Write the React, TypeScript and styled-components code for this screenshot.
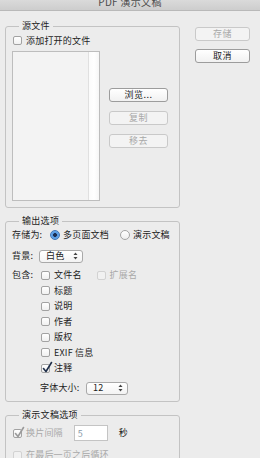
import React from 'react';
import styled, { createGlobalStyle, css } from 'styled-components';

const GlobalStyle = createGlobalStyle`
  html, body {
    margin: 0;
    padding: 0;
    background: #ececec;
  }
  body {
    font-family: "Noto Sans CJK SC", "Noto Sans", "Liberation Sans", sans-serif;
    font-size: 9px;
    color: #1c1c1c;
  }
`;

const Window = styled.div`
  width: 260px;
  height: 458px;
  overflow: hidden;
  background: #ececec;
`;

const TitleBar = styled.div`
  height: 10px;
  overflow: hidden;
  background: linear-gradient(#dadada, #cdcdcd);
  border-bottom: 1px solid #b9b9b9;
  display: flex;
  justify-content: center;
`;

const TitleText = styled.span`
  font-size: 10px;
  line-height: 10px;
  margin-top: -3px;
  color: #4c4c4c;
  letter-spacing: 0.3px;
`;

const Body = styled.div`
  display: flex;
  gap: 15px;
  padding-left: 5px;
`;

const LeftColumn = styled.div`
  width: 175px;
  display: flex;
  flex-direction: column;
`;

const RightColumn = styled.div`
  width: 55px;
  padding-top: 16px;
  display: flex;
  flex-direction: column;
  gap: 8px;
`;

const Group = styled.fieldset<{ $top: number; $bottom: number }>`
  margin: ${p => p.$top}px 0 0 0;
  padding: 0 6px ${p => p.$bottom}px 6px;
  border: 1px solid #c3c3c3;
  border-radius: 3px;
  min-width: 0;
  box-sizing: border-box;
`;

const Legend = styled.legend`
  margin-left: 7px;
  padding: 0 3px;
  font-size: 9px;
  line-height: 10px;
  color: #1c1c1c;
  letter-spacing: 0.3px;
`;

const Row = styled.div<{ $h: number; $mt?: number; $indent?: number; $gap?: number }>`
  display: flex;
  align-items: center;
  height: ${p => p.$h}px;
  margin-top: ${p => p.$mt ?? 0}px;
  padding-left: ${p => p.$indent ?? 0}px;
  gap: ${p => p.$gap ?? 0}px;
`;

const Text = styled.span<{ $disabled?: boolean; $w?: number }>`
  font-size: 9px;
  line-height: 10px;
  white-space: nowrap;
  letter-spacing: 0.2px;
  color: ${p => (p.$disabled ? '#a9a9a9' : '#1c1c1c')};
  ${p => p.$w !== undefined && css`width: ${p.$w}px; flex: none;`}
`;

const CheckBox = styled.span<{ $disabled?: boolean }>`
  position: relative;
  flex: none;
  width: 9px;
  height: 9px;
  box-sizing: border-box;
  border: 1px solid ${p => (p.$disabled ? '#d2d2d2' : '#a2a2a2')};
  border-radius: 2px;
  background: ${p => (p.$disabled ? '#f1f1f1' : 'linear-gradient(#ffffff, #f0f0f0)')};
  margin-right: 4px;
`;

const CheckMark = styled.svg`
  position: absolute;
  left: 0px;
  top: -3px;
  width: 11px;
  height: 11px;
  overflow: visible;
`;

const Radio = styled.span<{ $on?: boolean }>`
  flex: none;
  width: 10px;
  height: 10px;
  box-sizing: border-box;
  border-radius: 50%;
  margin-right: 3px;
  ${p =>
    p.$on
      ? css`
          border: 1px solid #3d74b8;
          background: radial-gradient(circle, #1d2f52 0 1.6px, #4f94e0 2.2px, #8cc0f2 100%);
        `
      : css`
          border: 1px solid #a5a5a5;
          background: linear-gradient(#ffffff, #eeeeee);
        `}
`;

const RadioSpacer = styled.span`
  width: 11px;
  flex: none;
`;

const ColumnSpacer = styled.span`
  width: 15px;
  flex: none;
`;

const SelectBox = styled.div<{ $w: number }>`
  width: ${p => p.$w}px;
  height: 13px;
  box-sizing: border-box;
  border: 1px solid #a9a9a9;
  border-radius: 3px;
  background: linear-gradient(#ffffff, #f3f3f3);
  display: flex;
  align-items: center;
  justify-content: space-between;
  padding: 0 4px 0 6px;
`;

const Arrows = () => (
  <svg width="5" height="8" viewBox="0 0 5 8">
    <path d="M2.5 0.5 L4.5 3 H0.5 Z" fill="#444" />
    <path d="M2.5 7.5 L4.5 5 H0.5 Z" fill="#444" />
  </svg>
);

const Button = styled.div<{ $disabled?: boolean; $w: number }>`
  width: ${p => p.$w}px;
  height: 14px;
  box-sizing: border-box;
  border: 1px solid ${p => (p.$disabled ? '#c9c9c9' : '#9c9c9c')};
  border-radius: 3px;
  background: ${p => (p.$disabled ? '#f3f3f3' : 'linear-gradient(#ffffff, #f1f1f1)')};
  display: flex;
  align-items: center;
  justify-content: center;
  font-size: 9px;
  line-height: 10px;
  letter-spacing: 0.5px;
  color: ${p => (p.$disabled ? '#a8a8a8' : '#1c1c1c')};
`;

const SourceBody = styled.div`
  display: flex;
  gap: 9px;
  margin-top: 5px;
`;

const FileList = styled.div`
  width: 88px;
  height: 150px;
  box-sizing: border-box;
  border: 1px solid #bdbdbd;
  background: #f3f3f3;
  display: flex;
  justify-content: flex-end;
`;

const ScrollTrack = styled.div`
  width: 10px;
  border-left: 1px solid #e0e0e0;
  background: linear-gradient(90deg, #fbfbfb, #ffffff, #f6f6f6);
`;

const SourceButtons = styled.div`
  display: flex;
  flex-direction: column;
  gap: 9px;
  padding-top: 37px;
`;

const NumberField = styled.div`
  width: 34px;
  height: 16px;
  box-sizing: border-box;
  border: 1px solid #c4c4c4;
  background: #ffffff;
  display: flex;
  align-items: center;
  padding-left: 3px;
  font-size: 9px;
  color: #8a9aa8;
  margin-left: 11px;
  margin-right: 11px;
`;

type CheckProps = { label: string; checked?: boolean; disabled?: boolean; gray?: boolean };

const Check = ({ label, checked, disabled, gray }: CheckProps) => (
  <>
    <CheckBox $disabled={disabled}>
      {checked && (
        <CheckMark viewBox="0 0 11 11">
          <path
            d="M1.5 6.5 L4 9.5 L9.5 0.5"
            fill="none"
            stroke={gray ? '#9a9a9a' : '#1f2f4a'}
            strokeWidth="1.6"
            strokeLinecap="round"
            strokeLinejoin="round"
          />
        </CheckMark>
      )}
    </CheckBox>
    <Text $disabled={disabled || gray}>{label}</Text>
  </>
);

const includeItems = [
  { label: '标题' },
  { label: '说明' },
  { label: '作者' },
  { label: '版权' },
  { label: 'EXIF 信息' },
  { label: '注释', checked: true },
];

export default function App() {
  return (
    <Window>
      <GlobalStyle />
      <TitleBar>
        <TitleText>PDF 演示文稿</TitleText>
      </TitleBar>
      <Body>
        <LeftColumn>
          <Group $top={10} $bottom={6}>
            <Legend>源文件</Legend>
            <Row $h={11} $mt={4} $indent={1}>
              <Check label="添加打开的文件" />
            </Row>
            <SourceBody>
              <FileList>
                <ScrollTrack />
              </FileList>
              <SourceButtons>
                <Button $w={59}>浏览...</Button>
                <Button $w={59} $disabled>复制</Button>
                <Button $w={59} $disabled>移去</Button>
              </SourceButtons>
            </SourceBody>
          </Group>

          <Group $top={8} $bottom={6}>
            <Legend>输出选项</Legend>
            <Row $h={14} $mt={2}>
              <Text $w={38}>存储为:</Text>
              <Radio $on />
              <Text>多页面文档</Text>
              <RadioSpacer />
              <Radio />
              <Text>演示文稿</Text>
            </Row>
            <Row $h={14} $mt={7}>
              <Text $w={27}>背景:</Text>
              <SelectBox $w={44}>
                <Text>白色</Text>
                <Arrows />
              </SelectBox>
            </Row>
            <Row $h={15.5} $mt={4.5}>
              <Text $w={29}>包含:</Text>
              <Check label="文件名" />
              <ColumnSpacer />
              <Check label="扩展名" disabled />
            </Row>
            {includeItems.map(item => (
              <Row key={item.label} $h={15.5} $indent={29}>
                <Check label={item.label} checked={item.checked} />
              </Row>
            ))}
            <Row $h={14} $mt={5} $indent={28}>
              <Text $w={46}>字体大小:</Text>
              <SelectBox $w={42}>
                <Text>12</Text>
                <Arrows />
              </SelectBox>
            </Row>
          </Group>

          <Group $top={8} $bottom={6}>
            <Legend>演示文稿选项</Legend>
            <Row $h={16} $mt={5} $indent={1}>
              <Check label="换片间隔" checked gray />
              <NumberField>5</NumberField>
              <Text>秒</Text>
            </Row>
            <Row $h={14} $mt={7} $indent={1}>
              <Check label="在最后一页之后循环" disabled />
            </Row>
          </Group>
        </LeftColumn>

        <RightColumn>
          <Button $w={55} $disabled>存储</Button>
          <Button $w={55}>取消</Button>
        </RightColumn>
      </Body>
    </Window>
  );
}
